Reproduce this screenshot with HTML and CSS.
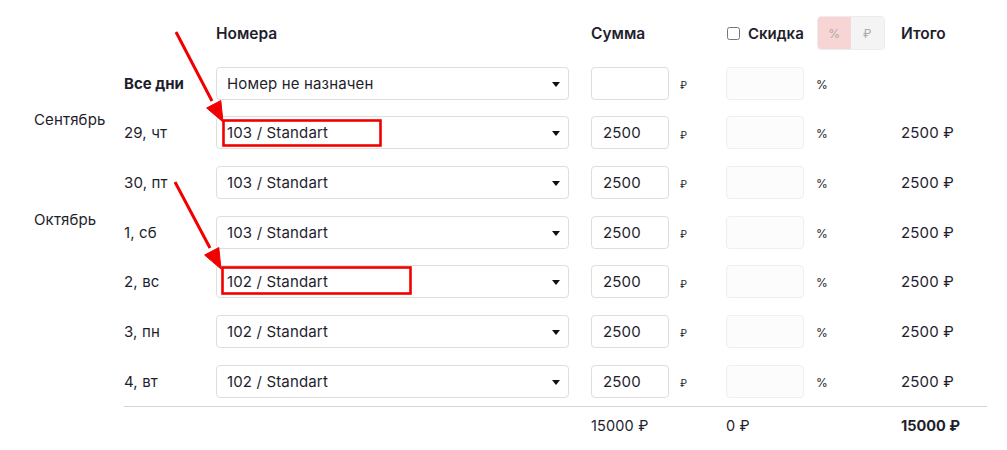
FILE: index.html
```html
<!DOCTYPE html>
<html lang="ru">
<head>
    <meta charset="UTF-8">
    <meta name="viewport" content="width=device-width, initial-scale=1.0">
    <title>Номера по дням</title>
    <link rel="stylesheet" href="styles.css">
</head>
<body>
    <div class="page">
        <div class="days-grid">
            <!-- header -->
            <div></div>
            <div></div>
            <div class="th">Номера</div>
            <div class="th">Сумма</div>
            <div class="th discount-head">
                <label class="check"><input type="checkbox"><span>Скидка</span></label>
                <div class="toggle">
                    <span class="toggle-btn active">%</span>
                    <span class="toggle-btn">₽</span>
                </div>
            </div>
            <div class="th">Итого</div>

            <!-- all days -->
            <div></div>
            <div class="day bold">Все дни</div>
            <div class="select"><span>Номер не назначен</span></div>
            <div class="sum"><input class="field" type="text" value=""><span class="cur">₽</span></div>
            <div class="disc"><input class="field muted" type="text" value=""><span class="pct">%</span></div>
            <div></div>

            <div class="month">Сентябрь</div>
            <div class="day">29, чт</div>
            <div class="select"><span>103 / Standart</span></div>
            <div class="sum"><input class="field" type="text" value="2500"><span class="cur">₽</span></div>
            <div class="disc"><input class="field muted" type="text" value=""><span class="pct">%</span></div>
            <div class="total">2500 ₽</div>

            <div></div>
            <div class="day">30, пт</div>
            <div class="select"><span>103 / Standart</span></div>
            <div class="sum"><input class="field" type="text" value="2500"><span class="cur">₽</span></div>
            <div class="disc"><input class="field muted" type="text" value=""><span class="pct">%</span></div>
            <div class="total">2500 ₽</div>

            <div class="month">Октябрь</div>
            <div class="day">1, сб</div>
            <div class="select"><span>103 / Standart</span></div>
            <div class="sum"><input class="field" type="text" value="2500"><span class="cur">₽</span></div>
            <div class="disc"><input class="field muted" type="text" value=""><span class="pct">%</span></div>
            <div class="total">2500 ₽</div>

            <div></div>
            <div class="day">2, вс</div>
            <div class="select"><span>102 / Standart</span></div>
            <div class="sum"><input class="field" type="text" value="2500"><span class="cur">₽</span></div>
            <div class="disc"><input class="field muted" type="text" value=""><span class="pct">%</span></div>
            <div class="total">2500 ₽</div>

            <div></div>
            <div class="day">3, пн</div>
            <div class="select"><span>102 / Standart</span></div>
            <div class="sum"><input class="field" type="text" value="2500"><span class="cur">₽</span></div>
            <div class="disc"><input class="field muted" type="text" value=""><span class="pct">%</span></div>
            <div class="total">2500 ₽</div>

            <div></div>
            <div class="day">4, вт</div>
            <div class="select"><span>102 / Standart</span></div>
            <div class="sum"><input class="field" type="text" value="2500"><span class="cur">₽</span></div>
            <div class="disc"><input class="field muted" type="text" value=""><span class="pct">%</span></div>
            <div class="total">2500 ₽</div>
        </div>

        <div class="foot">
            <div></div>
            <div></div>
            <div>15000 ₽</div>
            <div>0 ₽</div>
            <div class="bold">15000 ₽</div>
        </div>

        <!-- annotation overlay -->
        <svg class="marks" width="1007" height="450" viewBox="0 0 1007 450">
            <g fill="#f20000" stroke="#f20000">
                <line x1="176" y1="32" x2="212" y2="101" stroke-width="3"/>
                <polygon points="223,122 206.6,108 220.8,100.6" stroke-width="1"/>
                <line x1="175" y1="182" x2="210" y2="248" stroke-width="3"/>
                <polygon points="221,269 204.6,255 218.8,247.6" stroke-width="1"/>
            </g>
            <g fill="none" stroke="#f20000" stroke-width="2.6">
                <rect x="223.5" y="120.5" width="157" height="25"/>
                <rect x="222.5" y="267.5" width="188" height="26"/>
            </g>
        </svg>
    </div>
</body>
</html>
```

FILE: styles.css
```css
body {
    margin: 0;
    font-family: Inter, 'Noto Sans', sans-serif;
    font-size: 15px;
    letter-spacing: 0.15px;
    color: #1e1e2c;
    background: #fff;
}

.page {
    position: relative;
    width: 953px;
    height: 450px;
    padding: 16px 0 0 34px;
    box-sizing: content-box;
}

.days-grid {
    display: grid;
    grid-template-columns: 90px 92px 375px 135px 175px 1fr;
    row-gap: 16.67px;
    align-items: center;
}

.th {
    font-size: 15.5px;
    font-weight: 600;
    letter-spacing: 0;
    height: 34px;
    display: flex;
    align-items: center;
}

.discount-head {
    gap: 13px;
}

.check {
    display: flex;
    align-items: center;
    gap: 8px;
    font-size: 15px;
}

.check input {
    width: 13px;
    height: 13px;
    margin: 0 0 0 1px;
}

.toggle {
    display: flex;
    border-radius: 4px;
    overflow: hidden;
    border: 1px solid #ececec;
    height: 32px;
}

.toggle-btn {
    width: 33px;
    display: flex;
    align-items: center;
    justify-content: center;
    font-size: 12px;
    font-weight: 400;
    color: #a9a9a9;
    background: #f4f4f4;
}

.toggle-btn.active {
    background: #f8d5d5;
}

.month {
    align-self: start;
    margin-top: -6px;
}

.bold { font-weight: 700; letter-spacing: 0; }

.select {
    position: relative;
    width: 353px;
    height: 33px;
    box-sizing: border-box;
    border: 1px solid #dedede;
    border-radius: 4px;
    padding-left: 10px;
    display: flex;
    align-items: center;
}

.select::after {
    content: '';
    position: absolute;
    right: 8px;
    top: 14px;
    border-left: 4.5px solid transparent;
    border-right: 4.5px solid transparent;
    border-top: 5px solid #111;
}

.sum,
.disc {
    display: flex;
    align-items: center;
}

.field {
    width: 78px;
    height: 33px;
    box-sizing: border-box;
    border: 1px solid #dedede;
    border-radius: 4px;
    padding: 0 11px;
    font: inherit;
    letter-spacing: inherit;
    color: inherit;
    background: #fff;
}

.field.muted {
    background: #fcfcfc;
    border-color: #efefef;
}

.cur {
    margin-left: 11px;
    font-size: 10px;
    margin-top: 4px;
}

.pct {
    margin-left: 12px;
    font-size: 12px;
    margin-top: 2px;
}

.foot {
    display: grid;
    grid-template-columns: 92px 375px 135px 175px 1fr;
    margin: 8px 0 0 90px;
    border-top: 1px solid #d4d4d4;
    padding-top: 10px;
    line-height: 17px;
    font-size: 14.5px;
}

.marks {
    position: absolute;
    left: 0;
    top: 0;
    pointer-events: none;
}
```
